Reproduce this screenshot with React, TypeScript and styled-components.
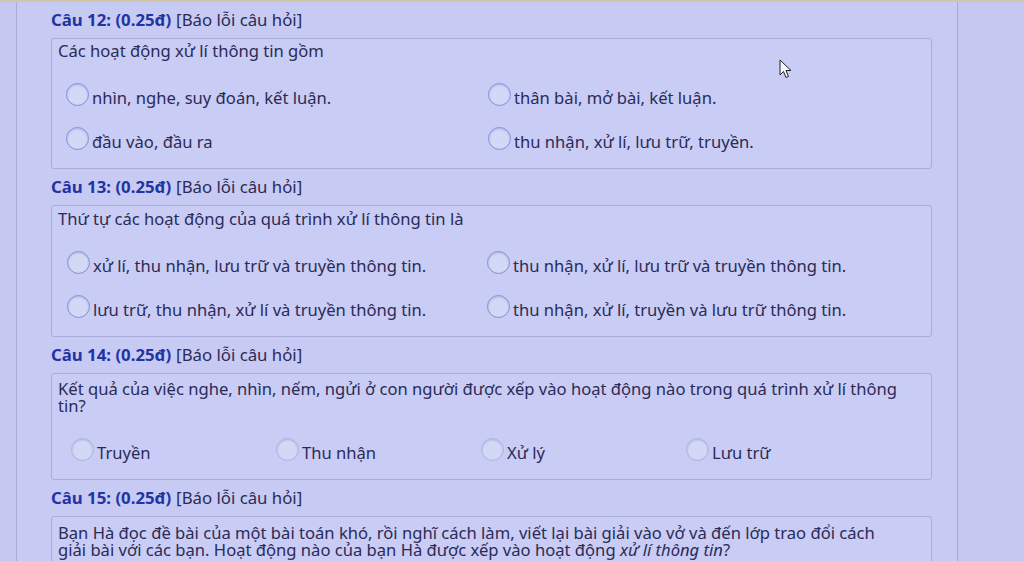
import styled, { createGlobalStyle } from 'styled-components';

const GlobalStyle = createGlobalStyle`
  html, body {
    margin: 0;
    padding: 0;
    background: #c4c7f0;
    height: 100%;
    overflow: hidden;
  }
  body {
    font-family: "Noto Sans", "Open Sans", sans-serif;
    color: #2a2b56;
  }
`;

const Page = styled.div`
  position: relative;
  height: 561px;
  border-top: 2px solid #cfc7a6;
  box-sizing: border-box;
`;

const Sheet = styled.div`
  margin-left: 16px;
  width: 942px;
  height: 100%;
  box-sizing: border-box;
  border-left: 1px solid #a7aadb;
  border-right: 1px solid #a7aadb;
  padding: 0 25px 0 34px;
  background: #c7caf2;
`;

const Question = styled.section`
  padding-top: 9px;
`;

const Heading = styled.div`
  height: 18px;
  line-height: 18px;
  font-size: 16.8px;
  margin-bottom: 9px;
  white-space: nowrap;
`;

const Number = styled.span`
  font-weight: 700;
  color: #2234a3;
  margin-right: 5px;
`;

const Report = styled.span`
  color: #2a2b56;
`;

const Box = styled.div<{ $top: number }>`
  border: 1px solid #a9acd9;
  border-radius: 3px;
  padding: ${p => p.$top}px 6px 5px;
  background: #c9ccf4;
`;

const Prompt = styled.div`
  font-size: 16.6px;
  line-height: 17px;
  padding-right: 20px;
`;

const Options = styled.div<{ $cols: number; $colWidth: string; $indent: number }>`
  display: grid;
  grid-template-columns: repeat(${p => p.$cols}, ${p => p.$colWidth});
  margin-top: 16px;
  padding-left: ${p => p.$indent}px;
`;

const Option = styled.label`
  display: flex;
  align-items: center;
  height: 44px;
  font-size: 16.6px;
  gap: 3px;
  white-space: nowrap;
`;

const Radio = styled.span<{ $faint?: boolean }>`
  flex: none;
  width: 21px;
  height: 21px;
  border-radius: 50%;
  border: 1.5px solid ${p => (p.$faint ? '#aab3e3' : '#7f92dc')};
  background: #d3d8f6;
  box-shadow: inset 0 1px 2px rgba(60, 70, 150, 0.25);
  margin-top: -5px;
`;

const Cursor = styled.svg`
  position: absolute;
  left: 779px;
  top: 57px;
`;

type Q = {
  n: number;
  prompt: React.ReactNode;
  options: string[];
  cols: number;
  colWidth: string;
  indent: number;
  top: number;
  faint?: boolean;
};

const questions: Q[] = [
  {
    n: 12,
    prompt: 'Các hoạt động xử lí thông tin gồm',
    options: [
      'nhìn, nghe, suy đoán, kết luận.',
      'thân bài, mở bài, kết luận.',
      'đầu vào, đầu ra',
      'thu nhận, xử lí, lưu trữ, truyền.',
    ],
    cols: 2,
    colWidth: '422px',
    indent: 8,
    top: 3,
  },
  {
    n: 13,
    prompt: 'Thứ tự các hoạt động của quá trình xử lí thông tin là',
    options: [
      'xử lí, thu nhận, lưu trữ và truyền thông tin.',
      'thu nhận, xử lí, lưu trữ và truyền thông tin.',
      'lưu trữ, thu nhận, xử lí và truyền thông tin.',
      'thu nhận, xử lí, truyền và lưu trữ thông tin.',
    ],
    cols: 2,
    colWidth: '420px',
    indent: 9,
    top: 4,
  },
  {
    n: 14,
    prompt:
      'Kết quả của việc nghe, nhìn, nếm, ngửi ở con người được xếp vào hoạt động nào trong quá trình xử lí thông tin?',
    options: ['Truyền', 'Thu nhận', 'Xử lý', 'Lưu trữ'],
    cols: 4,
    colWidth: '205px',
    indent: 13,
    top: 6,
    faint: true,
  },
  {
    n: 15,
    prompt: (
      <>
        Bạn Hà đọc đề bài của một bài toán khó, rồi nghĩ cách làm, viết lại bài giải vào vở và đến
        lớp trao đổi cách giải bài với các bạn. Hoạt động nào của bạn Hà được xếp vào hoạt động{' '}
        <em>xử lí thông tin</em>?
      </>
    ),
    options: [],
    cols: 2,
    colWidth: '420px',
    indent: 9,
    top: 7,
  },
];

export default function App() {
  return (
    <Page>
      <GlobalStyle />
      <Sheet>
        {questions.map(q => (
          <Question key={q.n}>
            <Heading>
              <Number>Câu {q.n}: (0.25đ)</Number>
              <Report>[Báo lỗi câu hỏi]</Report>
            </Heading>
            <Box $top={q.top}>
              <Prompt>{q.prompt}</Prompt>
              {q.options.length > 0 && (
                <Options $cols={q.cols} $colWidth={q.colWidth} $indent={q.indent}>
                  {q.options.map(o => (
                    <Option key={o}>
                      <Radio $faint={q.faint} />
                      {o}
                    </Option>
                  ))}
                </Options>
              )}
            </Box>
          </Question>
        ))}
      </Sheet>
      <Cursor width="14" height="20" viewBox="0 0 14 20">
        <path
          d="M1 1 L1 16 L4.5 12.5 L7 18.5 L9.5 17.5 L7 11.5 L12 11.5 Z"
          fill="#f4f5ff"
          stroke="#222"
          strokeWidth="1"
          strokeLinejoin="round"
        />
      </Cursor>
    </Page>
  );
}
